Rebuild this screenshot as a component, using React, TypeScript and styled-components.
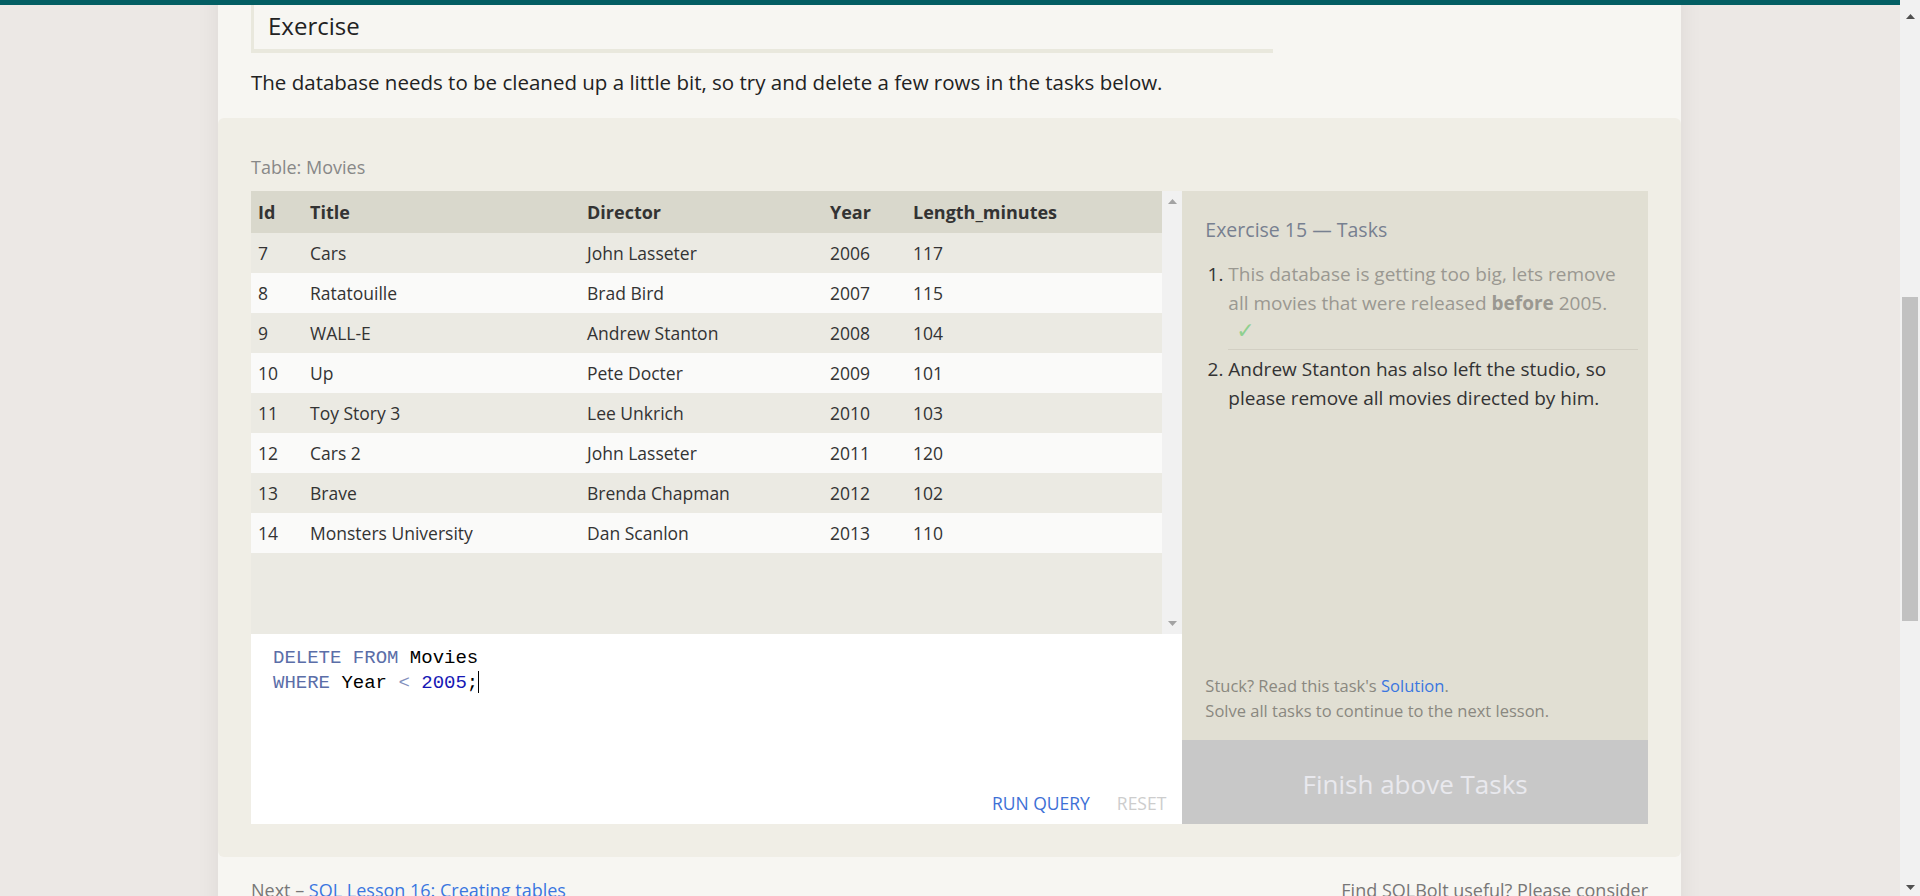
import React, { useLayoutEffect, useRef } from "react";
import styled, { createGlobalStyle } from "styled-components";

const GlobalStyle = createGlobalStyle`
  html, body { margin: 0; padding: 0; }
  body {
    background: #ece8e5;
    font-family: "Open Sans", "Noto Sans", sans-serif;
    color: #333;
  }
  * { box-sizing: border-box; }
`;

const TopBar = styled.div`
  position: fixed;
  top: 0;
  left: 0;
  right: 0;
  height: 5px;
  background: #035e63;
  z-index: 10;
`;

/* Drawn browser scrollbar of the window (overlays the page edge) */
const WindowScrollbar = styled.div`
  position: fixed;
  top: 0;
  right: 0;
  width: 20px;
  height: 100vh;
  background: #f1f1f1;
  z-index: 11;
  display: flex;
  flex-direction: column;
  align-items: center;
  justify-content: space-between;
  padding: 14px 0 6px;
`;

const WindowThumb = styled.div`
  position: absolute;
  left: 2px;
  right: 2px;
  top: 297px;
  height: 324px;
  background: #c1c1c1;
`;

const Arrow = styled.svg<{ $light?: boolean }>`
  display: block;
  fill: ${(p) => (p.$light ? "#a3a3a3" : "#505050")};
`;

const Page = styled.div`
  width: 1463px;
  margin: 0 auto 0 218px;
  background: #f7f6f2;
  box-shadow: 0 0 22px rgba(0, 0, 0, 0.07);
`;

const Intro = styled.section`
  height: 767px;
  overflow: hidden;
  padding: 60px 33px 0;
`;

const LessonTitle = styled.h1`
  margin: 0 0 24px;
  font-size: 34px;
  font-weight: 400;
  color: #222;
`;

const IntroText = styled.p`
  margin: 0 0 18px;
  font-size: 18px;
  line-height: 28px;
  color: #222;
  max-width: 1100px;
`;

const IntroCode = styled.pre`
  margin: 0 0 22px;
  padding: 16px 22px;
  background: #f0eee6;
  font-family: "Liberation Mono", monospace;
  font-size: 17px;
  line-height: 24px;
  color: #444;
`;

const ExerciseHeading = styled.h2`
  margin: 0 0 0 33px;
  width: 1022px;
  padding: 10px 0 7px 14px;
  border-left: 3px solid #e9e8dd;
  border-bottom: 4px solid #e9e8dd;
  font-size: 24px;
  line-height: 32px;
  font-weight: 400;
  color: #222;
`;

const Lead = styled.p`
  margin: 15px 33px 0;
  font-size: 20.5px;
  line-height: 28px;
  color: #222;
`;

const ExerciseSection = styled.section`
  margin-top: 22px;
  background: #f0eee6;
  border-radius: 6px;
  padding: 37px 33px 33px;
`;

const TableLabel = styled.div`
  font-size: 18px;
  line-height: 24px;
  color: #888;
  margin-bottom: 12px;
`;

const Workspace = styled.div`
  display: grid;
  grid-template-columns: 2fr 1fr;
  height: 633px;
`;

const LeftColumn = styled.div`
  display: flex;
  flex-direction: column;
  min-width: 0;
`;

const TableBox = styled.div`
  height: 443px;
  display: flex;
  background: #ebeae3;
`;

const TableArea = styled.div`
  flex: 1;
  min-width: 0;
  overflow: hidden;
`;

const BoxScrollbar = styled.div`
  width: 20px;
  flex: none;
  background: #f1f1f1;
  display: flex;
  flex-direction: column;
  align-items: center;
  justify-content: space-between;
  padding: 8px 0 8px;
`;

const Table = styled.table`
  width: 100%;
  border-collapse: collapse;
  table-layout: fixed;
`;

const Th = styled.th<{ $w?: number }>`
  ${(p) => (p.$w ? `width: ${p.$w}px;` : "")}
  text-align: left;
  padding: 9px 7px;
  line-height: 24px;
  font-size: 18px;
  font-weight: 700;
  color: #333;
  background: #d9d8cc;
`;

const Row = styled.tr<{ $odd: boolean }>`
  background: ${(p) => (p.$odd ? "#ebeae3" : "#fafaf9")};
  & + & td {
    border-top: 1px solid #dddcd5;
  }
`;

const Td = styled.td`
  padding: 8px 7px;
  line-height: 24px;
  font-size: 17.5px;
  color: #333;
  white-space: nowrap;
  overflow: hidden;
`;

const Editor = styled.div`
  flex: 1;
  background: #fff;
  display: flex;
  flex-direction: column;
`;

const Code = styled.pre`
  flex: 1;
  margin: 0;
  padding: 13px 22px 0;
  font-family: "Liberation Mono", monospace;
  font-size: 19px;
  line-height: 23.5px;
  color: #000;
`;

const Tok = styled.span<{ $kind: "kw" | "op" | "num" }>`
  color: ${(p) =>
    p.$kind === "kw" ? "#5b6ea8" : p.$kind === "op" ? "#8290bd" : "#1717b5"};
`;

const Caret = styled.span`
  display: inline-block;
  width: 0;
  height: 22px;
  border-left: 1.5px solid #000;
  vertical-align: -5px;
`;

const Actions = styled.div`
  display: flex;
  justify-content: flex-end;
  gap: 27px;
  padding: 0 16px 9px 0;
`;

const ActionButton = styled.button<{ $muted?: boolean }>`
  background: none;
  border: 0;
  padding: 0;
  font-family: inherit;
  font-size: 17.5px;
  line-height: 24px;
  text-transform: uppercase;
  color: ${(p) => (p.$muted ? "#cdcdcd" : "#3d70d6")};
  cursor: pointer;
`;

const TaskColumn = styled.div`
  display: flex;
  flex-direction: column;
  min-width: 0;
`;

const TaskPanel = styled.div`
  flex: 1;
  background: #e1dfd3;
  padding: 26px 10px 17.5px 23px;
  display: flex;
  flex-direction: column;
`;

const TaskTitle = styled.h3`
  margin: 0;
  font-size: 19.5px;
  line-height: 26px;
  font-weight: 400;
  color: #778090;
`;

const TaskList = styled.ol`
  margin: 17px 0 0;
  padding-left: 23px;
  font-size: 19px;
  line-height: 28.5px;
  color: #333;
`;

const TaskItem = styled.li`
  padding-bottom: 3.5px;
  & + & {
    border-top: 1px solid #d2cfc3;
    padding-top: 5px;
  }
`;

const TaskText = styled.span<{ $done?: boolean }>`
  color: ${(p) => (p.$done ? "#9a9891" : "#333")};
`;

const Check = styled.div`
  padding-left: 8px;
  font-family: "DejaVu Sans", sans-serif;
  font-size: 22px;
  line-height: 28.5px;
  color: #8fd08f;
`;

const Hint = styled.div`
  margin-top: auto;
  font-size: 16.5px;
  line-height: 25px;
  color: #8a8880;
`;

const Link = styled.a`
  color: #3a76e0;
  text-decoration: none;
`;

const FinishButton = styled.button`
  height: 84px;
  border: 0;
  background: #c8c8c8;
  color: #e9e9ee;
  font-family: inherit;
  font-size: 26px;
  padding: 4px 0 0;
  cursor: default;
`;

const Footer = styled.footer`
  height: 745px;
  padding: 21px 33px 0;
  display: flex;
  justify-content: space-between;
  align-items: flex-start;
  font-size: 18px;
  line-height: 24px;
  color: #777;
`;

const FooterRight = styled.div`
  text-align: right;
`;

const UpArrow = ({ light }: { light?: boolean }) => (
  <Arrow $light={light} width="9" height="5" viewBox="0 0 9 5">
    <polygon points="0,5 4.5,0 9,5" />
  </Arrow>
);

const DownArrow = ({ light }: { light?: boolean }) => (
  <Arrow $light={light} width="9" height="5" viewBox="0 0 9 5">
    <polygon points="0,0 9,0 4.5,5" />
  </Arrow>
);

const movies = [
  [7, "Cars", "John Lasseter", 2006, 117],
  [8, "Ratatouille", "Brad Bird", 2007, 115],
  [9, "WALL-E", "Andrew Stanton", 2008, 104],
  [10, "Up", "Pete Docter", 2009, 101],
  [11, "Toy Story 3", "Lee Unkrich", 2010, 103],
  [12, "Cars 2", "John Lasseter", 2011, 120],
  [13, "Brave", "Brenda Chapman", 2012, 102],
  [14, "Monsters University", "Dan Scanlon", 2013, 110],
];

export default function App() {
  const headingRef = useRef<HTMLHeadingElement>(null);

  useLayoutEffect(() => {
    const el = headingRef.current;
    if (el) {
      const top = el.getBoundingClientRect().top + window.scrollY;
      window.scrollTo(0, top);
    }
  }, []);

  return (
    <>
      <GlobalStyle />
      <TopBar />
      <WindowScrollbar>
        <UpArrow />
        <WindowThumb />
        <DownArrow />
      </WindowScrollbar>
      <Page>
        <Intro>
          <LessonTitle>SQL Lesson 15: Deleting rows</LessonTitle>
          <IntroText>
            When you need to delete data from a table in the database, you can use a DELETE
            statement, which describes the table to act on, and the rows of the table to delete
            through the WHERE clause.
          </IntroText>
          <IntroCode>{"DELETE FROM mytable\nWHERE condition;"}</IntroCode>
          <IntroText>
            If you decide to leave out the WHERE constraint, then all rows are removed, which is a
            quick and easy way to clear out a table completely (if intentional).
          </IntroText>
          <IntroText>
            Like the UPDATE statement from last lesson, it's recommended that you run the
            constraint in a SELECT query first to ensure that you are removing the right rows.
            Without a proper backup or test database, it is downright easy to irrevocably remove
            data, so always read your DELETE statements twice and execute once.
          </IntroText>
        </Intro>

        <ExerciseHeading ref={headingRef}>Exercise</ExerciseHeading>
        <Lead>
          The database needs to be cleaned up a little bit, so try and delete a few rows in the
          tasks below.
        </Lead>

        <ExerciseSection>
          <TableLabel>Table: Movies</TableLabel>
          <Workspace>
            <LeftColumn>
              <TableBox>
                <TableArea>
                  <Table>
                    <thead>
                      <tr>
                        <Th $w={52}>Id</Th>
                        <Th $w={277}>Title</Th>
                        <Th $w={243}>Director</Th>
                        <Th $w={83}>Year</Th>
                        <Th>Length_minutes</Th>
                      </tr>
                    </thead>
                    <tbody>
                      {movies.map((m, i) => (
                        <Row key={m[0] as number} $odd={i % 2 === 0}>
                          {m.map((v, j) => (
                            <Td key={j}>{v}</Td>
                          ))}
                        </Row>
                      ))}
                    </tbody>
                  </Table>
                </TableArea>
                <BoxScrollbar>
                  <UpArrow light />
                  <DownArrow light />
                </BoxScrollbar>
              </TableBox>
              <Editor>
                <Code>
                  <Tok $kind="kw">DELETE</Tok> <Tok $kind="kw">FROM</Tok> Movies
                  {"\n"}
                  <Tok $kind="kw">WHERE</Tok> Year <Tok $kind="op">&lt;</Tok>{" "}
                  <Tok $kind="num">2005</Tok>;<Caret />
                </Code>
                <Actions>
                  <ActionButton>Run Query</ActionButton>
                  <ActionButton $muted>Reset</ActionButton>
                </Actions>
              </Editor>
            </LeftColumn>

            <TaskColumn>
              <TaskPanel>
                <TaskTitle>Exercise 15 — Tasks</TaskTitle>
                <TaskList>
                  <TaskItem>
                    <TaskText $done>
                      This database is getting too big, lets remove all movies that were released{" "}
                      <b>before</b> 2005.
                    </TaskText>
                    <Check>✓</Check>
                  </TaskItem>
                  <TaskItem>
                    <TaskText>
                      Andrew Stanton has also left the studio, so please remove all movies
                      directed by him.
                    </TaskText>
                  </TaskItem>
                </TaskList>
                <Hint>
                  Stuck? Read this task's <Link href="#">Solution</Link>.
                  <br />
                  Solve all tasks to continue to the next lesson.
                </Hint>
              </TaskPanel>
              <FinishButton>Finish above Tasks</FinishButton>
            </TaskColumn>
          </Workspace>
        </ExerciseSection>

        <Footer>
          <div>
            Next – <Link href="#">SQL Lesson 16: Creating tables</Link>
          </div>
          <FooterRight>
            Find SQLBolt useful? Please consider
            <br />
            <Link href="#">Donating ($4) via PayPal</Link> to support our work!
          </FooterRight>
        </Footer>
      </Page>
    </>
  );
}
